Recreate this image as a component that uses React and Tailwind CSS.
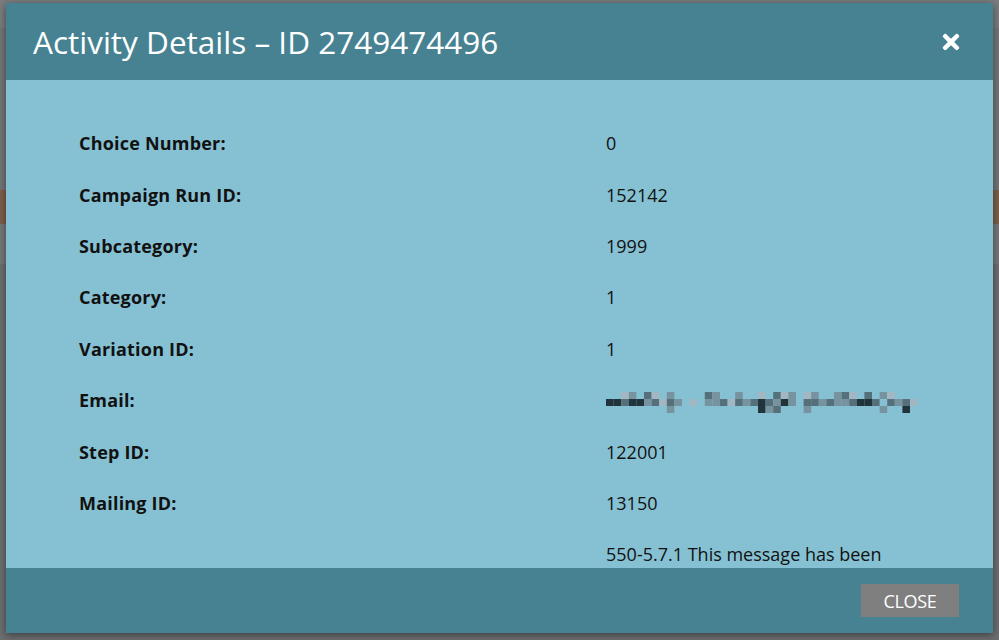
import React from 'react'
import { FaTimes } from 'react-icons/fa'

const rows = [
  ['Choice Number:', '0'],
  ['Campaign Run ID:', '152142'],
  ['Subcategory:', '1999'],
  ['Category:', '1'],
  ['Variation ID:', '1'],
  ['Email:', null],
  ['Step ID:', '122001'],
  ['Mailing ID:', '13150'],
  ['', '550-5.7.1 This message has been'],
]

// pixelated (redacted) email address
const mosaic = [
  '..ab.ca.b....cb..b..a.cab.ab..bca.c.ba...',
  'ddcddbcacb.a.bbcacbcdcbdb.ccbcbbcddc.cbca',
  '........b...........dbc...b.........b..d.',
]
const shade = { a: '#a3b7c3', b: '#7893a0', c: '#55707b', d: '#22343b' }

const Mosaic = () => (
  <svg width="314" height="21" viewBox="0 0 314 21">
    {mosaic.map((line, r) =>
      line.split('').map((ch, i) =>
        shade[ch] ? (
          <rect key={r + '-' + i} x={i * 7.6} y={r * 7} width="7.6" height="7" fill={shade[ch]} />
        ) : null
      )
    )}
  </svg>
)

const App = () => {
  return (
    <div className="relative w-[999px] h-[640px] overflow-hidden bg-[#6d6e6f] font-['Open_Sans',sans-serif]">
      {/* page behind the overlay */}
      <div className="h-[28px] bg-[#7b7c7d]" />
      <div className="h-[162px] bg-[#747576]" />
      <div className="h-[34px] bg-[#7d5f4a]" />
      <div className="h-[40px] bg-[#767778]" />

      {/* modal */}
      <div className="absolute left-[6px] top-[3px] w-[987px] h-[630px] flex flex-col shadow-[0_2px_8px_rgba(0,0,0,0.45)]">
        <div className="h-[77px] shrink-0 bg-[#468292] flex items-center justify-between pl-[27px] pr-[30px]">
          <h1 className="text-white text-[31.5px] leading-none">
            Activity Details – ID 2749474496
          </h1>
          <FaTimes className="text-white text-[24px]" />
        </div>

        <div className="flex-1 overflow-hidden bg-[#86c1d3] pt-[38px] pl-[73px]">
          {rows.map(([label, value], i) => (
            <div key={i} className="h-[51.4px] flex items-center text-[18px] text-[#111]">
              <div className="w-[527px] font-bold tracking-[0.2px]">{label}</div>
              <div>{value === null ? <div className="pt-[4px]"><Mosaic /></div> : value}</div>
            </div>
          ))}
        </div>

        <div className="h-[65px] shrink-0 bg-[#468292] flex items-center justify-end pr-[34px]">
          <button className="w-[98px] h-[33px] bg-[#7f7f7f] text-white text-[18px] leading-none tracking-[-0.3px]">
            CLOSE
          </button>
        </div>
      </div>
    </div>
  )
}

export default App
